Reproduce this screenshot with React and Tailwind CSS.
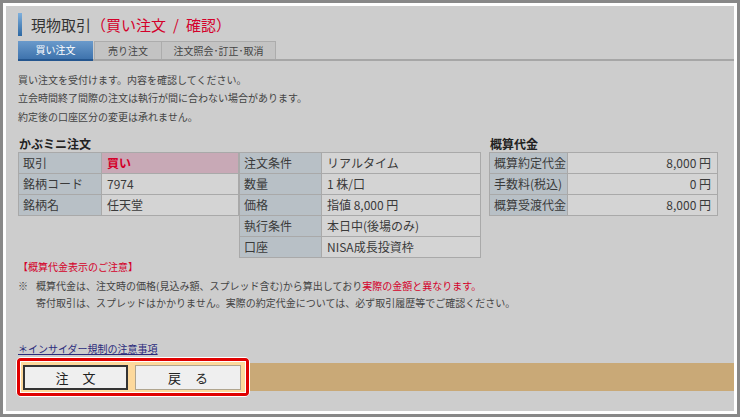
import React from "react";

const font = { fontFamily: '"Noto Sans CJK JP", "Noto Sans", sans-serif' };

const orderRows = [
  { label: "取引", value: "買い", buy: true },
  { label: "銘柄コード", value: "7974" },
  { label: "銘柄名", value: "任天堂" },
];

const conditionRows = [
  { label: "注文条件", value: "リアルタイム" },
  { label: "数量", value: "1 株/口" },
  { label: "価格", value: "指値 8,000 円" },
  { label: "執行条件", value: "本日中(後場のみ)" },
  { label: "口座", value: "NISA成長投資枠" },
];

const amountRows = [
  { label: "概算約定代金", value: "8,000 円" },
  { label: "手数料(税込)", value: "0 円" },
  { label: "概算受渡代金", value: "8,000 円" },
];

const InfoTable = ({ rows, width, labelWidth, alignRight }) => (
  <table
    className="border-collapse border-t border-t-[#8c93b0] text-[12px] text-[#3a3a3a] table-fixed"
    style={{ width }}
  >
    <colgroup>
      <col style={{ width: labelWidth }} />
      <col />
    </colgroup>
    <tbody>
      {rows.map((r) => (
        <tr key={r.label} className="h-[21px]">
          <td className="border border-[#a9a9a9] bg-[#b8c0c6] px-[4px] leading-none whitespace-nowrap">
            {r.label}
          </td>
          <td
            className={
              "border border-[#a9a9a9] px-[5px] leading-none whitespace-nowrap " +
              (r.buy
                ? "bg-[#c8a9b6] text-[#d4002a] font-bold"
                : "bg-[#d4d4d4]") +
              (alignRight ? " text-right pr-[6px]" : "")
            }
          >
            {r.value}
          </td>
        </tr>
      ))}
    </tbody>
  </table>
);

export default function App() {
  return (
    <div className="w-[740px] h-[417px] bg-[#888888] p-[3px]" style={font}>
      <div className="h-full border-[3px] border-white bg-[#cdcdcd] pl-[12px] flex flex-col">
        {/* title */}
        <div className="mt-[7px] flex items-center h-[23px]">
          <div className="w-[4px] h-[23px] bg-gradient-to-b from-[#7fb0dc] to-[#2c68a3]" />
          <h1 className="ml-[9px] text-[15px] leading-none text-[#333]">
            現物取引
            <span className="text-[#d4002a]">
              （買い注文<span className="mx-[7px]">/</span>確認）
            </span>
          </h1>
        </div>

        {/* tabs */}
        <div className="mt-[5px] flex border-b-2 border-[#a6a6a6] h-[20px] text-[10px] leading-none">
          <div className="w-[75px] flex items-center justify-center text-white bg-gradient-to-b from-[#6a9acb] to-[#3e73ad] border-b-2 border-[#24568f] -mb-[2px]">
            買い注文
          </div>
          <div className="w-[68px] flex items-center justify-center text-[#444] bg-[#c3c3c3] border border-b-0 border-[#acacac] ml-[1px]">
            売り注文
          </div>
          <div className="w-[114px] flex items-center justify-center text-[#444] bg-[#c3c3c3] border border-b-0 border-l-0 border-[#acacac]">
            注文照会･訂正･取消
          </div>
        </div>

        {/* messages */}
        <div className="mt-[10px] text-[10px] text-[#444] leading-[18px]">
          <p>買い注文を受付けます。内容を確認してください。</p>
          <p>立会時間終了間際の注文は執行が間に合わない場合があります。</p>
          <p className="mt-[1px]">約定後の口座区分の変更は承れません。</p>
        </div>

        {/* tables */}
        <div className="mt-[10px] flex items-start">
          <div>
            <h2 className="pl-[1px] text-[12px] leading-[16px] font-bold text-[#222]">かぶミニ注文</h2>
            <div className="flex items-start">
              <InfoTable rows={orderRows} width={221} labelWidth={83} />
              <InfoTable rows={conditionRows} width={242} labelWidth={82} />
            </div>
          </div>
          <div className="ml-[8px]">
            <h2 className="pl-[1px] text-[12px] leading-[16px] font-bold text-[#222]">概算代金</h2>
            <InfoTable rows={amountRows} width={229} labelWidth={78} alignRight />
          </div>
        </div>

        {/* notes */}
        <p className="mt-[1px] text-[10px] leading-[16px] text-[#d4002a]">【概算代金表示のご注意】</p>
        <div className="mt-[2px] text-[10px] leading-[17px] text-[#444]">
          <p>
            <span className="inline-block w-[18px]">※</span>
            概算代金は、注文時の価格(見込み額、スプレッド含む)から算出しており
            <span className="text-[#d4002a]">実際の金額と異なります。</span>
          </p>
          <p className="pl-[18px]">
            寄付取引は、スプレッドはかかりません。実際の約定代金については、必ず取引履歴等でご確認ください。
          </p>
        </div>

        <a href="#" className="mt-[30px] self-start text-[10px] leading-[16px] text-[#2b2b7c] underline">
          ＊インサイダー規制の注意事項
        </a>

        {/* button bar */}
        <div className="mt-[6px] h-[28px] bg-[#c9a977] flex items-center">
          <div className="-ml-[2px] rounded-[5px] border border-white">
            <div className="rounded-[4px] border-[3px] border-[#e00000]">
              <div className="border border-white bg-[#fdd99c] flex gap-[7px] pl-[2px] pr-[4px] pt-[3px] pb-[2px]">
                <button className="w-[105px] h-[25px] bg-[#efefef] border-2 border-[#333] text-[13px] leading-none text-[#222] tracking-[14px] pl-[14px]">
                  注文
                </button>
                <button className="w-[106px] h-[25px] bg-[#efefef] border border-[#b0a58f] text-[13px] leading-none text-[#222] tracking-[14px] pl-[14px]">
                  戻る
                </button>
              </div>
            </div>
          </div>
        </div>
      </div>
    </div>
  );
}
